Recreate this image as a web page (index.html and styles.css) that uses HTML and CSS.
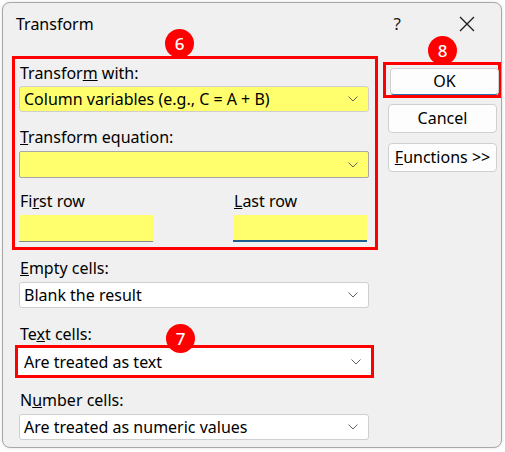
FILE: index.html
```html
<!DOCTYPE html>
<html>
<head>
<meta charset="utf-8">
<link rel="stylesheet" href="styles.css">
</head>
<body>
<div class="dialog">
  <div class="titlebar">
    <span class="title">Transform</span>
    <span class="help">?</span>
    <svg class="close" width="16" height="16" viewBox="0 0 16 16"><path d="M1 1 L15 15 M15 1 L1 15" stroke="#1a1a1a" stroke-width="1.3" fill="none"/></svg>
  </div>
  <div class="main">
    <div class="left">
      <div class="redbox group">
        <span class="badge badge6">6</span>
        <div class="label">Transfor<u>m</u> with:</div>
        <div class="combo yellow">
          <span class="ctext">Column variables (e.g., C = A + B)</span>
          <svg class="chev" width="10" height="6" viewBox="0 0 10 6"><path d="M0.5 0.5 L5 5 L9.5 0.5" stroke="#606060" fill="none"/></svg>
        </div>
        <div class="label gap"><u>T</u>ransform equation:</div>
        <div class="combo yellow tall">
          <span class="ctext"></span>
          <svg class="chev" width="10" height="6" viewBox="0 0 10 6"><path d="M0.5 0.5 L5 5 L9.5 0.5" stroke="#606060" fill="none"/></svg>
        </div>
        <div class="rows">
          <div class="rowcol">
            <div class="label">Fi<u>r</u>st row</div>
            <div class="input yellow"></div>
          </div>
          <div class="rowcol">
            <div class="label"><u>L</u>ast row</div>
            <div class="input yellow focused"></div>
          </div>
        </div>
      </div>
      <div class="plain">
        <div class="label"><u>E</u>mpty cells:</div>
        <div class="combo white">
          <span class="ctext">Blank the result</span>
          <svg class="chev" width="10" height="6" viewBox="0 0 10 6"><path d="M0.5 0.5 L5 5 L9.5 0.5" stroke="#606060" fill="none"/></svg>
        </div>
        <div class="label gap2">Te<u>x</u>t cells:</div>
      </div>
      <div class="redbox single">
        <span class="badge badge7">7</span>
        <div class="combo white inbox">
          <span class="ctext">Are treated as text</span>
          <svg class="chev" width="10" height="6" viewBox="0 0 10 6"><path d="M0.5 0.5 L5 5 L9.5 0.5" stroke="#606060" fill="none"/></svg>
        </div>
      </div>
      <div class="plain">
        <div class="label gap3">N<u>u</u>mber cells:</div>
        <div class="combo white">
          <span class="ctext">Are treated as numeric values</span>
          <svg class="chev" width="10" height="6" viewBox="0 0 10 6"><path d="M0.5 0.5 L5 5 L9.5 0.5" stroke="#606060" fill="none"/></svg>
        </div>
      </div>
    </div>
    <div class="right">
      <div class="redbox okbox">
        <span class="badge badge8">8</span>
        <div class="btn ok">OK</div>
      </div>
      <div class="btn">Cancel</div>
      <div class="btn"><u>F</u>unctions &gt;&gt;</div>
    </div>
  </div>
</div>
</body>
</html>
```

FILE: styles.css
```css
html, body {
  margin: 0;
  padding: 0;
  background: #ffffff;
}
body {
  font-family: "Noto Sans", "Open Sans", sans-serif;
  color: #000;
  width: 505px;
  height: 452px;
  overflow: hidden;
}
.dialog {
  margin: 2px 0 0 2px;
  width: 500px;
  height: 446px;
  box-sizing: border-box;
  border: 1px solid #a8a8a8;
  border-radius: 8px;
  background: #f0f0f0;
  box-shadow: 0 0 3px rgba(0,0,0,0.15);
}
.titlebar {
  height: 53px;
  display: flex;
  align-items: flex-start;
  padding: 9px 0 0 13px;
  box-sizing: border-box;
}
.title {
  font-size: 16px;
  line-height: 24px;
  flex: 1;
}
.help {
  font-size: 17px;
  line-height: 24px;
  color: #1a1a1a;
  margin-right: 58px;
}
.close {
  margin: 4px 26px 0 0;
}
.main {
  display: flex;
  padding-left: 9px;
}
.left {
  width: 366px;
  display: flex;
  flex-direction: column;
}
.right {
  margin-left: 3px;
  width: 119px;
  display: flex;
  flex-direction: column;
}
.redbox {
  position: relative;
  border: 3px solid #ff0000;
}
.group {
  height: 194px;
  box-sizing: border-box;
  padding: 4px 6px 0 4px;
}
.badge {
  position: absolute;
  width: 29px;
  height: 29px;
  border-radius: 50%;
  background: #ff0000;
  color: #fff;
  font-size: 17px;
  font-weight: 500;
  line-height: 29px;
  text-align: center;
  font-family: "Noto Sans", sans-serif;
}
.badge6 { left: 150px; top: -30px; }
.badge7 { left: 148px; top: -24px; }
.badge8 { left: 42px; top: -29px; }
.label {
  font-size: 16px;
  line-height: 20px;
  padding-left: 1px;
  margin-bottom: 3px;
}
.label.gap { margin-top: 15px; margin-bottom: 4px; }
.combo {
  height: 26px;
  box-sizing: border-box;
  border: 1px solid #cfcfcf;
  border-radius: 3px;
  display: flex;
  align-items: center;
  padding: 0 10px 0 4px;
}
.combo.tall { height: 27px; border-color: #a8a8a8; border-radius: 2px; }
.yellow { background: #ffff6e; }
.white { background: #ffffff; }
.ctext {
  flex: 1;
  font-size: 16px;
  white-space: nowrap;
}
.chev { flex: none; }
.rows {
  display: flex;
  justify-content: space-between;
  margin-top: 13px;
  padding-right: 2px;
}
.rowcol {
  width: 134px;
}
.rowcol .label { margin-bottom: 4px; }
.input {
  height: 27px;
  box-sizing: border-box;
  border-bottom: 1px solid #8a8a8a;
}
.input.focused {
  border-bottom: 2px solid #1f5f8f;
}
.plain {
  padding: 8px 9px 0 7px;
}
.plain .label { margin-bottom: 4px; }
.label.gap2 { margin-top: 16px; margin-bottom: 1px; }
.label.gap3 { margin-top: 4px; }
.single {
  margin-left: 3px;
  width: 359px;
  height: 33px;
  box-sizing: border-box;
}
.combo.inbox {
  border: none;
  border-radius: 0;
  height: 27px;
  padding-left: 6px;
  padding-right: 10px;
}
.okbox {
  margin-top: 6px;
  margin-left: 2px;
  width: 118px;
  height: 36px;
  box-sizing: border-box;
  padding: 3px 3px 0 4px;
}
.btn {
  height: 29px;
  box-sizing: border-box;
  border: 1px solid #d0d0d0;
  border-radius: 4px;
  background: #fdfdfd;
  font-size: 16px;
  line-height: 27px;
  text-align: center;
  width: 109px;
  margin-left: 7px;
  margin-top: 6px;
}
.btn.ok {
  margin: 0;
  width: 109px;
  height: 27px;
  line-height: 25px;
  border-bottom: 1px solid #2d6fb0;
}
.okbox + .btn { margin-top: 6px; }
.btn + .btn { margin-top: 10px; }
```
